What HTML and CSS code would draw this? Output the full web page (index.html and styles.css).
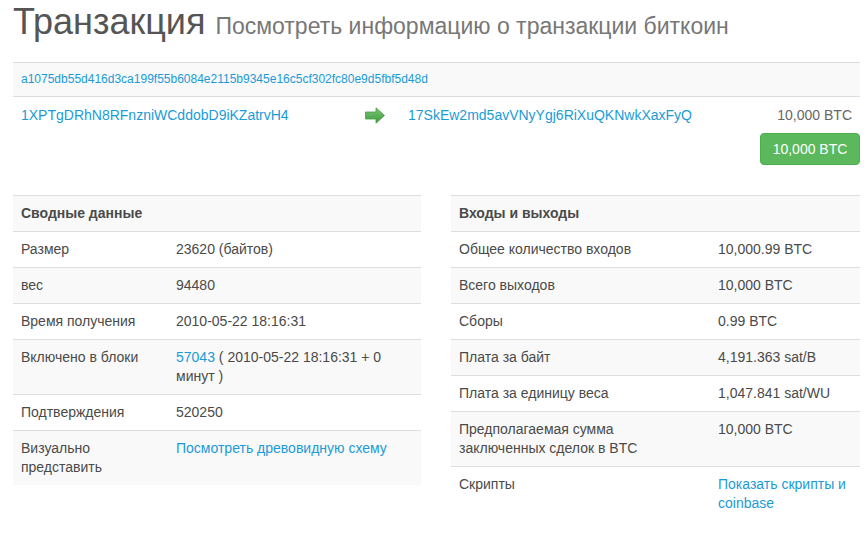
FILE: index.html
```html
<!DOCTYPE html>
<html lang="ru">
<head>
    <meta charset="UTF-8">
    <meta name="viewport" content="width=device-width, initial-scale=1.0">
    <title>Транзакция</title>
    <link rel="stylesheet" href="styles.css">
</head>
<body>
    <div class="container">
        <h1>Транзакция <small>Посмотреть информацию о транзакции биткоин</small></h1>

        <div class="tx-box">
            <div class="tx-hash">
                <a href="#">a1075db55d416d3ca199f55b6084e2115b9345e16c5cf302fc80e9d5fbf5d48d</a>
            </div>
            <div class="tx-io">
                <div class="tx-in">
                    <a href="#">1XPTgDRhN8RFnzniWCddobD9iKZatrvH4</a>
                </div>
                <div class="tx-arrow">
                    <svg width="20" height="17" viewBox="0 0 20 17">
                        <defs>
                            <linearGradient id="arrowFill" x1="0" y1="0" x2="0" y2="1">
                                <stop offset="0" stop-color="#7cc576"/>
                                <stop offset="1" stop-color="#3f9a3f"/>
                            </linearGradient>
                        </defs>
                        <polygon points="0.5,5 11,5 11,0.8 19.5,8.5 11,16.2 11,12 0.5,12" fill="url(#arrowFill)" stroke="#4a9c46" stroke-width="0.8"/>
                    </svg>
                </div>
                <div class="tx-out">
                    <div class="out-line">
                        <a href="#">17SkEw2md5avVNyYgj6RiXuQKNwkXaxFyQ</a>
                        <span class="out-amount">10,000 BTC</span>
                    </div>
                    <div class="out-total">
                        <button type="button" class="btn btn-success">10,000 BTC</button>
                    </div>
                </div>
            </div>
        </div>

        <div class="row">
            <table class="table table-striped">
                <colgroup><col class="summary-label"><col></colgroup>
                <tbody>
                    <tr><th colspan="2">Сводные данные</th></tr>
                    <tr><td>Размер</td><td>23620 (байтов)</td></tr>
                    <tr><td>вес</td><td>94480</td></tr>
                    <tr><td>Время получения</td><td>2010-05-22 18:16:31</td></tr>
                    <tr><td>Включено в блоки</td><td><a href="#">57043</a> ( 2010-05-22 18:16:31 + 0 минут )</td></tr>
                    <tr><td>Подтверждения</td><td>520250</td></tr>
                    <tr><td>Визуально представить</td><td><a href="#">Посмотреть древовидную схему</a></td></tr>
                </tbody>
            </table>

            <table class="table table-striped">
                <colgroup><col class="io-label"><col></colgroup>
                <tbody>
                    <tr><th colspan="2">Входы и выходы</th></tr>
                    <tr><td>Общее количество входов</td><td>10,000.99 BTC</td></tr>
                    <tr><td>Всего выходов</td><td>10,000 BTC</td></tr>
                    <tr><td>Сборы</td><td>0.99 BTC</td></tr>
                    <tr><td>Плата за байт</td><td>4,191.363 sat/B</td></tr>
                    <tr><td>Плата за единицу веса</td><td>1,047.841 sat/WU</td></tr>
                    <tr><td>Предполагаемая сумма<br>заключенных сделок в BTC</td><td>10,000 BTC</td></tr>
                    <tr><td>Скрипты</td><td><a href="#">Показать скрипты и coinbase</a></td></tr>
                </tbody>
            </table>
        </div>
    </div>
</body>
</html>
```

FILE: styles.css
```css
body {
    margin: 0;
    font-family: "Liberation Sans", Arial, sans-serif;
    font-size: 14px;
    line-height: 19px;
    color: #4a4a4a;
    background: #fff;
}
a {
    color: #1a9bd7;
    text-decoration: none;
}
.container {
    width: 847px;
    padding: 0 8px 0 13px;
}
h1 {
    margin: 2px 0 16px;
    font-size: 36px;
    line-height: 40px;
    font-weight: normal;
    color: #555;
}
h1 small {
    font-size: 23px;
    color: #777;
}
.tx-box {
    margin-bottom: 22px;
}
.tx-hash {
    border-top: 1px solid #ddd;
    background: #f9f9f9;
    padding: 8px;
    font-size: 12px;
    line-height: 17px;
}
.tx-io {
    display: grid;
    grid-template-columns: 344px 43px 1fr;
    border-top: 1px solid #ddd;
}
.tx-in {
    padding: 8px;
    line-height: 20px;
}
.tx-arrow {
    padding: 10px 0 0 8px;
}
.tx-out {
    padding: 8px 0 8px 8px;
    line-height: 20px;
}
.out-line {
    display: flex;
    justify-content: space-between;
}
.out-amount {
    padding-right: 8px;
    color: #666;
}
.out-total {
    display: flex;
    justify-content: flex-end;
    margin-top: 8px;
}
.btn {
    font-family: inherit;
    font-size: 14px;
    line-height: 20px;
    padding: 6px 12px;
    border-radius: 4px;
    border: 1px solid transparent;
    cursor: pointer;
}
.btn-success {
    background: #5cb85c;
    border-color: #4cae4c;
    color: #fff;
    width: 100px;
    padding: 5px 0;
}
.row {
    display: grid;
    grid-template-columns: 408px 409px;
    column-gap: 30px;
    align-items: start;
}
.table {
    width: 100%;
    border-collapse: collapse;
    table-layout: fixed;
}
.table th,
.table td {
    padding: 8px;
    border-top: 1px solid #ddd;
    text-align: left;
    vertical-align: top;
}
.table th {
    font-weight: bold;
}
.table-striped tr:nth-child(odd) {
    background: #f9f9f9;
}
.summary-label {
    width: 155px;
}
.io-label {
    width: 259px;
}
```
